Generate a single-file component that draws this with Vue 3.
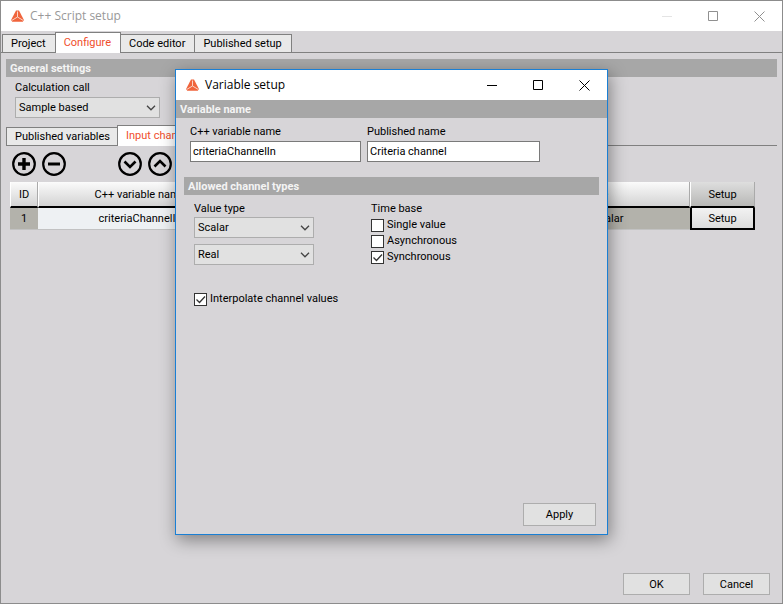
<script setup>
import { ref } from 'vue'

const mainTabs = ['Project', 'Configure', 'Code editor', 'Published setup']
const channelTabs = ['Published variables', 'Input channels']
const activeMain = ref('Configure')
const activeChannel = ref('Input channels')
const call = ref('Sample based')
const variableName = ref('criteriaChannelIn')
const publishedName = ref('Criteria channel')
const shape = ref('Scalar')
const number = ref('Real')
const interpolate = ref(true)
const timeBases = ref([
  { label: 'Single value', on: false },
  { label: 'Asynchronous', on: false },
  { label: 'Synchronous', on: true }
])
const tools = [
  { name: 'Add', d: 'M12 6v12M6 12h12', w: 3.4 },
  { name: 'Remove', d: 'M6 12h12', w: 3 },
  { name: 'Move down', d: 'M6.500 9.500l5.500 5.500 5.500-5.500', w: 2.6 },
  { name: 'Move up', d: 'M6.500 14.500l5.500-5.500 5.500 5.500', w: 2.6 }
]
</script>

<template>
  <div class="window">
    <header class="titlebar inactive">
      <svg class="logo" viewBox="0 0 13 12">
        <path d="M5 0.500H8L12.900 10 11.800 11.700H1.200L0.100 10z" fill="#f0643c" />
        <path d="M6.500 1.500V7L1 10.300M6.500 7L12 10.300" fill="none" stroke="#fbd3c5" stroke-width="1" />
      </svg>
      <h1>C++ Script setup</h1>
      <div class="controls">
        <button aria-label="Minimize" class="faint"><svg viewBox="0 0 11 11"><path d="M0 5.500h10" /></svg></button>
        <button aria-label="Maximize"><svg viewBox="0 0 11 11"><path d="M.5.5h9v9h-9z" /></svg></button>
        <button aria-label="Close"><svg viewBox="0 0 11 11"><path d="M.5.5l10 10M10.500.5l-10 10" /></svg></button>
      </div>
    </header>

    <nav class="tabs main-tabs">
      <button v-for="t in mainTabs" :key="t" :class="{ active: t === activeMain }" @click="activeMain = t">{{ t }}</button>
    </nav>

    <main class="page">
      <h2 class="section">General settings</h2>
      <div class="field call">
        <label for="call">Calculation call</label>
        <span class="select">
          <select id="call" v-model="call"><option>Sample based</option><option>Block based</option></select>
          <svg viewBox="0 0 10 6"><path d="M1 .8l4 4 4-4" /></svg>
        </span>
      </div>

      <nav class="tabs channel-tabs">
        <button v-for="t in channelTabs" :key="t" :class="{ active: t === activeChannel }" @click="activeChannel = t">{{ t }}</button>
      </nav>

      <div class="tools">
        <button v-for="t in tools" :key="t.name" :aria-label="t.name">
          <svg viewBox="0 0 24 24">
            <circle cx="12" cy="12" r="10.8" />
            <path :d="t.d" :stroke-width="t.w" />
          </svg>
        </button>
      </div>

      <table class="grid">
        <colgroup><col class="c-id"><col class="c-name"><col><col class="c-type"><col class="c-setup"></colgroup>
        <thead>
          <tr><th>ID</th><th>C++ variable name</th><th>Published name</th><th>Type</th><th class="last">Setup</th></tr>
        </thead>
        <tbody>
          <tr>
            <td class="gray">1</td>
            <td>{{ variableName }}</td>
            <td>{{ publishedName }}</td>
            <td class="gray">Real scalar</td>
            <td class="setup"><button>Setup</button></td>
          </tr>
        </tbody>
      </table>
    </main>

    <footer class="actions">
      <button class="push">OK</button>
      <button class="push">Cancel</button>
    </footer>

    <section class="dialog" role="dialog" aria-label="Variable setup">
      <header class="titlebar">
        <svg class="logo" viewBox="0 0 13 12">
          <path d="M5 0.500H8L12.900 10 11.800 11.700H1.200L0.100 10z" fill="#f0643c" />
          <path d="M6.500 1.500V7L1 10.300M6.500 7L12 10.300" fill="none" stroke="#fbd3c5" stroke-width="1" />
        </svg>
        <h1>Variable setup</h1>
        <div class="controls">
          <button aria-label="Minimize"><svg viewBox="0 0 11 11"><path d="M0 5.500h10" /></svg></button>
          <button aria-label="Maximize"><svg viewBox="0 0 11 11"><path d="M.5.5h9v9h-9z" /></svg></button>
          <button aria-label="Close"><svg viewBox="0 0 11 11"><path d="M.5.5l10 10M10.500.5l-10 10" /></svg></button>
        </div>
      </header>

      <h2 class="section">Variable name</h2>
      <div class="names">
        <div class="field">
          <label for="vname">C++ variable name</label>
          <input id="vname" v-model="variableName" type="text">
        </div>
        <div class="field">
          <label for="pname">Published name</label>
          <input id="pname" v-model="publishedName" type="text">
        </div>
      </div>

      <h2 class="section inset">Allowed channel types</h2>
      <div class="types">
        <div class="field value-type">
          <label for="shape">Value type</label>
          <span class="select">
            <select id="shape" v-model="shape"><option>Scalar</option><option>Vector</option></select>
            <svg viewBox="0 0 10 6"><path d="M1 .8l4 4 4-4" /></svg>
          </span>
          <span class="select">
            <select v-model="number" aria-label="Number type"><option>Real</option><option>Complex</option></select>
            <svg viewBox="0 0 10 6"><path d="M1 .8l4 4 4-4" /></svg>
          </span>
        </div>
        <fieldset class="field">
          <legend>Time base</legend>
          <label v-for="b in timeBases" :key="b.label" class="check">
            <span class="box"><input v-model="b.on" type="checkbox"><svg v-if="b.on" viewBox="0 0 13 13"><path d="M2.500 6.500l3 3 5.500-6" /></svg></span>
            {{ b.label }}
          </label>
        </fieldset>
      </div>
      <label class="check interpolate">
        <span class="box"><input v-model="interpolate" type="checkbox"><svg v-if="interpolate" viewBox="0 0 13 13"><path d="M2.500 6.500l3 3 5.500-6" /></svg></span>
        Interpolate channel values
      </label>
      <div class="dialog-actions"><button class="push">Apply</button></div>
    </section>
  </div>
</template>

<style>
body { background: #d7d5d8; }
</style>

<style scoped>
* { box-sizing: border-box; }
.window {
  position: relative;
  display: flex;
  flex-direction: column;
  min-height: 100vh;
  border: 1px solid #8c8c8c;
  background: #d7d5d8;
  color: #000;
  font: 11px/16px Roboto, sans-serif;
}
button, input, select { font: inherit; color: inherit; margin: 0; border-radius: 0; }
h1, h2 { margin: 0; }

.titlebar { display: flex; align-items: center; flex: none; height: 30px; padding-left: 10px; background: #fff; }
.titlebar h1 { margin-left: 6px; font: 12px/16px "Open Sans", "Noto Sans", sans-serif; }
.titlebar.inactive h1 { color: #999; }
.logo { width: 13px; height: 12px; }
.controls { display: flex; margin-left: auto; }
.controls button { display: flex; align-items: center; justify-content: center; width: 46px; height: 29px; padding: 0; border: 0; background: none; }
.controls svg { width: 11px; height: 11px; fill: none; stroke: #000; }
.inactive .controls svg { stroke: #909090; }
.inactive .controls .faint svg { stroke: #e4e4e4; }

.tabs { display: flex; align-items: flex-end; border-bottom: 1px solid #808080; }
.tabs button { height: 18px; margin-left: -1px; padding: 1px 9px 0 8px; border: 1px solid #808080; border-bottom: 0; background: #e9e9e9; line-height: 16px; white-space: nowrap; }
.tabs .active { height: 21px; margin-bottom: -1px; padding-bottom: 1px; background: #fff; color: #f04e2c; }
.main-tabs { flex: none; height: 22px; padding-left: 2px; }

.page { padding: 6px 5px 0; }
.section { height: 18px; padding-left: 4px; background: #a7a7a7; color: #f4f4f4; font: bold 11px/20px Roboto, sans-serif; }
.field { display: flex; flex-direction: column; }
.call { width: 145px; margin: 3px 0 0 9px; gap: 1px; }
.select { position: relative; display: block; height: 21px; }
.select select { width: 100%; height: 21px; padding: 1px 24px 0 3px; border: 1px solid #adadad; background: #e1e1e1; appearance: none; outline: 0; }
.select svg { position: absolute; right: 4px; top: 8px; width: 10px; height: 6px; fill: none; stroke: #444; stroke-width: 1.3; pointer-events: none; }

.channel-tabs { height: 21px; margin-top: 7px; padding-left: 1px; }
.channel-tabs button { padding-right: 7px; }
.tools { display: flex; gap: 6px; padding: 6px 0 0 6px; }
.tools button { width: 24px; height: 24px; padding: 0; border: 0; background: none; }
.tools button:nth-child(3) { margin-left: 46px; }
.tools svg { display: block; width: 24px; height: 24px; fill: none; stroke: #000; }
.tools circle { stroke-width: 2.2; }

.grid { width: calc(100% - 26px); margin: 6px 0 0 4px; border-collapse: separate; border-spacing: 0; table-layout: fixed; text-align: center; }
.c-id { width: 28px; }
.c-name { width: 204px; }
.c-type { width: 187px; }
.c-setup { width: 65px; }
.grid th { height: 26px; padding: 1px 0 0; border-bottom: 2px solid #000; border-right: 1px solid #aaa; border-left: 1px solid #fff; background: linear-gradient(#fbfbfb, #d3d3d3); font-weight: normal; }
.grid th.last { background: linear-gradient(#dedede, #b8b8b6); }
.grid td { height: 22px; padding: 0; border-bottom: 1px solid #c2c2c2; background: #eef1f3; }
.grid td.gray { background: #b3b2ab; }
.grid td.setup { border: 0; }
.setup button { display: block; width: 100%; height: 22px; padding: 1px 0 0; border: 2px solid #000; border-top: 0; background: linear-gradient(#f2f2f2, #dcdcdc); }

.push { width: 67px; height: 22px; padding: 1px 0 0; border: 1px solid #adadad; background: #e1e1e1; }
.actions { display: flex; justify-content: flex-end; gap: 13px; margin-top: auto; padding: 0 12px 8px; }

.dialog {
  position: absolute;
  inset: 68px 174px;
  display: flex;
  flex-direction: column;
  border: 1px solid #1a7fd4;
  background: #d7d5d8;
  box-shadow: 2px 5px 16px rgba(0, 0, 0, .4);
}
.names { display: grid; grid-template-columns: 171px 173px; gap: 6px; padding: 6px 14px 0; }
.names .field { gap: 1px; }
.names input { width: 100%; height: 21px; padding: 0 2px; border: 1px solid #7a7a7a; background: #fff; outline: 0; }
.inset { margin: 15px 8px 0; }
.types { display: flex; gap: 57px; padding: 6px 18px 0; }
.value-type { width: 120px; }
.value-type .select { margin-bottom: 6px; }
fieldset { margin: 0; padding: 0; border: 0; }
legend { padding: 0; }
.check { display: flex; align-items: center; gap: 3px; height: 16px; line-height: 18px; }
.box { position: relative; width: 13px; height: 13px; }
.box input { display: block; width: 13px; height: 13px; margin: 0; border: 1px solid #333; background: #fff; appearance: none; }
.box svg { position: absolute; inset: 0; fill: none; stroke: #333; stroke-width: 1.3; pointer-events: none; }
.interpolate { margin: 20px 18px 0; }
.dialog-actions { display: flex; justify-content: flex-end; margin-top: auto; padding: 0 11px 8px; }
.dialog-actions .push { width: 73px; height: 23px; }
</style>
